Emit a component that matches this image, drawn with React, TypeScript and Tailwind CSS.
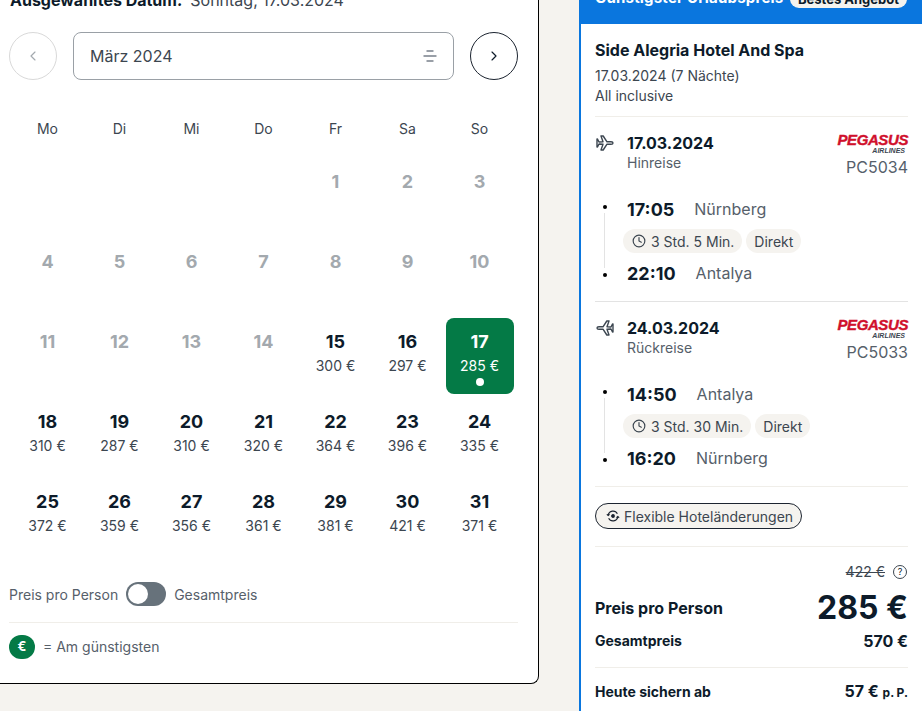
import { ChevronLeft, ChevronRight, Clock } from 'lucide-react';

const weekdays = ['Mo', 'Di', 'Mi', 'Do', 'Fr', 'Sa', 'So'];

const prices: Record<number, number> = {
  15: 300, 16: 297, 17: 285, 18: 310, 19: 287, 20: 310, 21: 320, 22: 364, 23: 396, 24: 335,
  25: 372, 26: 359, 27: 356, 28: 361, 29: 381, 30: 421, 31: 371,
};

function DayCell({ day }: { day: number }) {
  const price = prices[day];
  if (day === 17) {
    return (
      <div className="h-[80px] px-[2px]">
        <div className="-mt-[1px] flex h-[76px] flex-col items-center rounded-[8px] bg-[#047a46] pt-[14px] text-white">
          <span className="text-[18px] font-bold leading-[20px]">{day}</span>
          <span className="mt-[4px] text-[14px] leading-[20px]">{price} €</span>
          <span className="mt-[2px] h-[8px] w-[8px] rounded-full bg-white" />
        </div>
      </div>
    );
  }
  return (
    <div className="flex h-[80px] flex-col items-center pt-[13px]">
      <span className={`text-[18px] font-bold leading-[20px] ${price ? 'text-[#0d1b2a]' : 'text-[#a3a9ae]'}`}>{day}</span>
      {price && <span className="mt-[4px] text-[14px] leading-[20px] text-[#3c4650]">{price} €</span>}
    </div>
  );
}

function PlaneIcon({ back }: { back?: boolean }) {
  return (
    <svg
      viewBox="0 0 20 20"
      className={`h-5 w-5 ${back ? '-scale-x-100' : ''}`}
      fill="none"
      stroke="#3c4650"
      strokeWidth="1.4"
      strokeLinejoin="round"
    >
      <path d="M2.500 6 4 9 8 8.800 6 3h2.200L12 8.800h4c1.300 0 2 .5 2 1.200s-.7 1.200-2 1.200h-4L8.200 17H6l2-5.800L4 11l-1.500 3H2V6z" />
    </svg>
  );
}

function PegasusLogo() {
  return (
    <div className="flex flex-col items-end font-['Liberation_Sans',sans-serif] italic">
      <span className="text-[15px] font-bold leading-[14px] tracking-[-0.4px] text-[#d0102c] [-webkit-text-stroke:0.4px_#d0102c]">PEGASUS</span>
      <span className="pr-[3px] text-[7px] font-bold leading-[7px] text-[#3c4650]">AIRLINES</span>
    </div>
  );
}

function Leg({ date, label, flight, back, from, depart, to, arrive, duration }: {
  date: string; label: string; flight: string; back?: boolean;
  from: string; depart: string; to: string; arrive: string; duration: string;
}) {
  return (
    <div>
      <div className="flex justify-between">
        <div className="flex gap-[12px]">
          <div className="pt-[2px]"><PlaneIcon back={back} /></div>
          <div>
            <div className="text-[16px] font-bold leading-[24px] text-[#0d1b2a]">{date}</div>
            <div className="text-[14px] leading-[16px] text-[#56606a]">{label}</div>
          </div>
        </div>
        <div className="flex flex-col items-end pt-[2px]">
          <PegasusLogo />
          <div className="mt-[3px] text-[16px] leading-[20px] text-[#56606a]">{flight}</div>
        </div>
      </div>
      <div className="relative mt-[20px] pl-[32px]">
        <span className="absolute left-[8px] top-[8px] h-[4px] w-[4px] rounded-full bg-black" />
        <span className="absolute left-[9px] top-[16px] h-[55px] w-px bg-[#e3e3e3]" />
        <span className="absolute left-[8px] top-[76px] h-[4px] w-[4px] rounded-full bg-black" />
        <div className="flex h-[24px] items-center gap-[20px]">
          <span className="text-[18px] font-bold text-[#0d1b2a]">{depart}</span>
          <span className="text-[16px] text-[#56606a]">{from}</span>
        </div>
        <div className="mt-[8px] flex gap-[4px]">
          <span className="-ml-[4px] flex h-[24px] items-center gap-[5px] rounded-full bg-[#f5f3ef] pl-[9px] pr-[8px] text-[14px] text-[#3c4650]">
            <Clock size={14} strokeWidth={2} />
            {duration}
          </span>
          <span className="flex h-[24px] items-center rounded-full bg-[#f5f3ef] px-[8px] text-[14px] text-[#3c4650]">Direkt</span>
        </div>
        <div className="mt-[8px] flex h-[24px] items-center gap-[20px]">
          <span className="text-[18px] font-bold text-[#0d1b2a]">{arrive}</span>
          <span className="text-[16px] text-[#56606a]">{to}</span>
        </div>
      </div>
    </div>
  );
}

export default function App() {
  const days = Array.from({ length: 31 }, (_, i) => i + 1);

  return (
    <div className="h-[711px] w-[922px] overflow-hidden bg-[#f5f3ef] font-['Inter',sans-serif] text-[#0d1b2a]">
      <div className="-mt-[10px] flex items-start gap-[40px]">
        <div className="h-[694px] w-[539px] rounded-br-[8px] border-r border-b border-black bg-white pl-[9px] pr-[20px]">
          <div className="pl-px text-[16px] leading-[20px]">
            <span className="font-bold">Ausgewähltes Datum:</span>
            <span className="ml-[8px] text-[#3c4650]">Sonntag, 17.03.2024</span>
          </div>
          <div className="mt-[22px] flex items-center gap-[16px]">
            <button className="flex h-[48px] w-[48px] items-center justify-center rounded-full border border-[#d9d9d9] text-[#a3a9ae]">
              <ChevronLeft size={16} strokeWidth={1.75} />
            </button>
            <div className="flex h-[48px] flex-1 items-center justify-between rounded-[8px] border border-[#9aa0a6] pl-[16px] pr-[15px]">
              <span className="text-[16px] text-[#3c4650]">März 2024</span>
              <svg viewBox="0 0 16 16" className="h-4 w-4" stroke="#78808a" strokeWidth="1.4" strokeLinecap="round">
                <path d="M5 3h6M2 8h12M5 13h6" />
              </svg>
            </div>
            <button className="flex h-[48px] w-[48px] items-center justify-center rounded-full border border-[#1c2430] text-[#0d1b2a]">
              <ChevronRight size={16} strokeWidth={1.75} />
            </button>
          </div>
          <div className="ml-[2.5px] w-[504px]">
            <div className="mt-[39px] grid grid-cols-7">
              {weekdays.map((d) => (
                <div key={d} className="text-center text-[14px] leading-[20px] text-[#3c4650]">{d}</div>
              ))}
            </div>
            <div className="mt-[20px] grid grid-cols-7">
              {[0, 1, 2, 3].map((i) => <div key={i} />)}
              {days.map((d) => <DayCell key={d} day={d} />)}
            </div>
          </div>
          <div className="mt-[23px] flex items-center gap-[8px] text-[14px] text-[#56606a]">
            <span>Preis pro Person</span>
            <span className="flex h-[24px] w-[40px] items-center rounded-full bg-[#67727b] pl-[2px]">
              <span className="h-[20px] w-[20px] rounded-full bg-white" />
            </span>
            <span>Gesamtpreis</span>
          </div>
          <div className="mt-[16px] flex items-center gap-[8px] border-t border-[#f0eee9] pt-[12px] text-[14px] text-[#56606a]">
            <span className="flex h-[24px] w-[26px] items-center justify-center rounded-full bg-[#047a46] text-[13px] font-bold text-white">€</span>
            <span className="-mt-[1px]">= Am günstigsten</span>
          </div>
        </div>

        <div className="h-[730px] flex-1 border-l-[2px] border-[#0a76de] bg-white">
          <div className="flex h-[34px] items-start justify-between bg-[#0a76de] pl-[14px] pr-[15px]">
            <span className="text-[15px] font-bold leading-[16px] tracking-[0.2px] text-white">Günstigster Urlaubspreis</span>
            <span className="rounded-full bg-[#f5f3ef] px-[8px] text-[13px] font-bold leading-[18px]">Bestes Angebot</span>
          </div>
          <div className="pl-[14px] pr-[14px]">
            <div className="mt-[14px] text-[16px] font-bold leading-[24px]">Side Alegria Hotel And Spa</div>
            <div className="mt-[4px] text-[14px] leading-[20px] text-[#3c4650]">17.03.2024 (7 Nächte)</div>
            <div className="text-[14px] leading-[20px] text-[#3c4650]">All inclusive</div>
            <div className="mt-[10px] border-t border-[#f0eee9] pt-[14px]">
              <Leg date="17.03.2024" label="Hinreise" flight="PC5034" from="Nürnberg" depart="17:05" to="Antalya" arrive="22:10" duration="3 Std. 5 Min." />
            </div>
            <div className="mt-[16px] border-t border-[#e3e3e3] pt-[14px]">
              <Leg back date="24.03.2024" label="Rückreise" flight="PC5033" from="Antalya" depart="14:50" to="Nürnberg" arrive="16:20" duration="3 Std. 30 Min." />
            </div>
            <div className="mt-[16px] border-t border-[#f0eee9] pt-[16px]">
              <span className="inline-flex h-[26px] items-center gap-[4px] rounded-full border border-[#1c2430] bg-[#f5f3ef] pl-[10px] pr-[8px] text-[14px] text-[#3c4650]">
                <svg viewBox="0 0 16 16" className="h-[14px] w-[14px]" fill="none" stroke="#1c2430" strokeWidth="1.300">
                  <path d="M2.500 7a5.600 5.600 0 0 1 10.500-1.500M13.500 9a5.600 5.600 0 0 1-10.500 1.500" />
                  <path d="M1 6l1.500 1.500L4 6M15 10l-1.500-1.500L12 10" />
                  <circle cx="8" cy="8" r="1.500" fill="#1c2430" />
                </svg>
                Flexible Hoteländerungen
              </span>
            </div>
            <div className="mt-[17px] border-t border-[#f0eee9] pt-[16px]">
              <div className="flex items-center justify-end gap-[8px] pr-px text-[14px] leading-[18px]">
                <span className="text-[#3c4650] line-through">422 €</span>
                <span className="flex h-[14px] w-[14px] items-center justify-center rounded-full border border-[#3c4650] text-[9px]">?</span>
              </div>
              <div className="mt-[7px] flex items-center justify-between">
                <span className="text-[16px] font-bold">Preis pro Person</span>
                <span className="text-[32px] font-bold leading-[40px]">285 €</span>
              </div>
              <div className="mt-[3px] flex items-center justify-between text-[14px] font-bold leading-[20px]">
                <span>Gesamtpreis</span>
                <span className="text-[16px]">570 €</span>
              </div>
              <div className="mt-[16px] flex items-center justify-between border-t border-[#f0eee9] pt-[13px] text-[14px] font-bold leading-[20px]">
                <span>Heute sichern ab</span>
                <span className="text-[16px]">57 € <span className="text-[12px] font-bold">p. P.</span></span>
              </div>
            </div>
          </div>
        </div>
      </div>
    </div>
  );
}
